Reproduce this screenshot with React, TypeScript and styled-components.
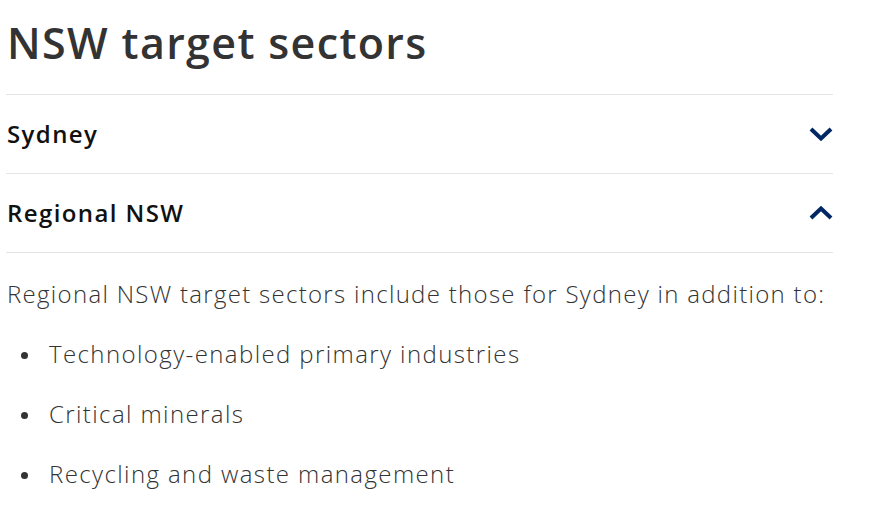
import React from "react";
import styled, { createGlobalStyle } from "styled-components";

const Global = createGlobalStyle`
  html, body { margin: 0; padding: 0; background: #ffffff; }
  body { font-family: "Open Sans", "Noto Sans", Arial, sans-serif; }
`;

const Page = styled.main`
  width: 827px;
  padding: 17px 0 0 6px;
`;

const Title = styled.h1`
  margin: 0 0 25px 1px;
  font-size: 43px;
  line-height: 52px;
  font-weight: 600;
  letter-spacing: 1.35px;
  color: #333333;
`;

const Accordion = styled.div`
  border-top: 1px solid #e4e4e4;
`;

const Item = styled.section`
  border-bottom: 1px solid #e4e4e4;
`;

const Header = styled.button`
  all: unset;
  box-sizing: border-box;
  width: 100%;
  height: 78px;
  padding: 0 0 2px 1px;
  display: flex;
  align-items: center;
  justify-content: space-between;
  cursor: pointer;
  font-family: "Open Sans", "Noto Sans", Arial, sans-serif;
  font-size: 24px;
  font-weight: 600;
  letter-spacing: 1.4px;
  color: #111111;
`;

const Chevron = styled.svg<{ $open: boolean }>`
  width: 24px;
  height: 14px;
  margin-top: 2px;
  transform: ${(p) => (p.$open ? "rotate(180deg)" : "none")};
`;

const Body = styled.div`
  padding: 23px 0 0 1px;
  font-size: 24px;
  line-height: 36px;
  font-weight: 300;
  letter-spacing: 1.3px;
  color: #333333;
`;

const Para = styled.p`
  margin: 0 0 24px 0;
`;

const List = styled.ul`
  margin: 0;
  padding: 0 0 0 14px;
  list-style: none;
`;

const Li = styled.li`
  display: flex;
  align-items: center;
  margin: 0 0 24px 0;
  letter-spacing: 1.4px;
  &::before {
    content: "";
    flex: none;
    width: 7px;
    height: 7px;
    margin: 2px 21px 0 0;
    border-radius: 50%;
    background: #333333;
  }
`;

const ChevronIcon = ({ open }: { open: boolean }) => (
  <Chevron $open={open} viewBox="0 0 24 14" aria-hidden>
    <path d="M2 2 L12 11.5 L22 2" fill="none" stroke="#002664" strokeWidth="4" />
  </Chevron>
);

export default function App() {
  return (
    <>
      <Global />
      <Page>
        <Title>NSW target sectors</Title>
        <Accordion>
          <Item>
            <Header>
              <span>Sydney</span>
              <ChevronIcon open={false} />
            </Header>
          </Item>
          <Item>
            <Header>
              <span>Regional NSW</span>
              <ChevronIcon open={true} />
            </Header>
          </Item>
        </Accordion>
        <Body>
          <Para>Regional NSW target sectors include those for Sydney in addition to:</Para>
          <List>
            <Li>Technology-enabled primary industries</Li>
            <Li>Critical minerals</Li>
            <Li>Recycling and waste management</Li>
          </List>
        </Body>
      </Page>
    </>
  );
}
